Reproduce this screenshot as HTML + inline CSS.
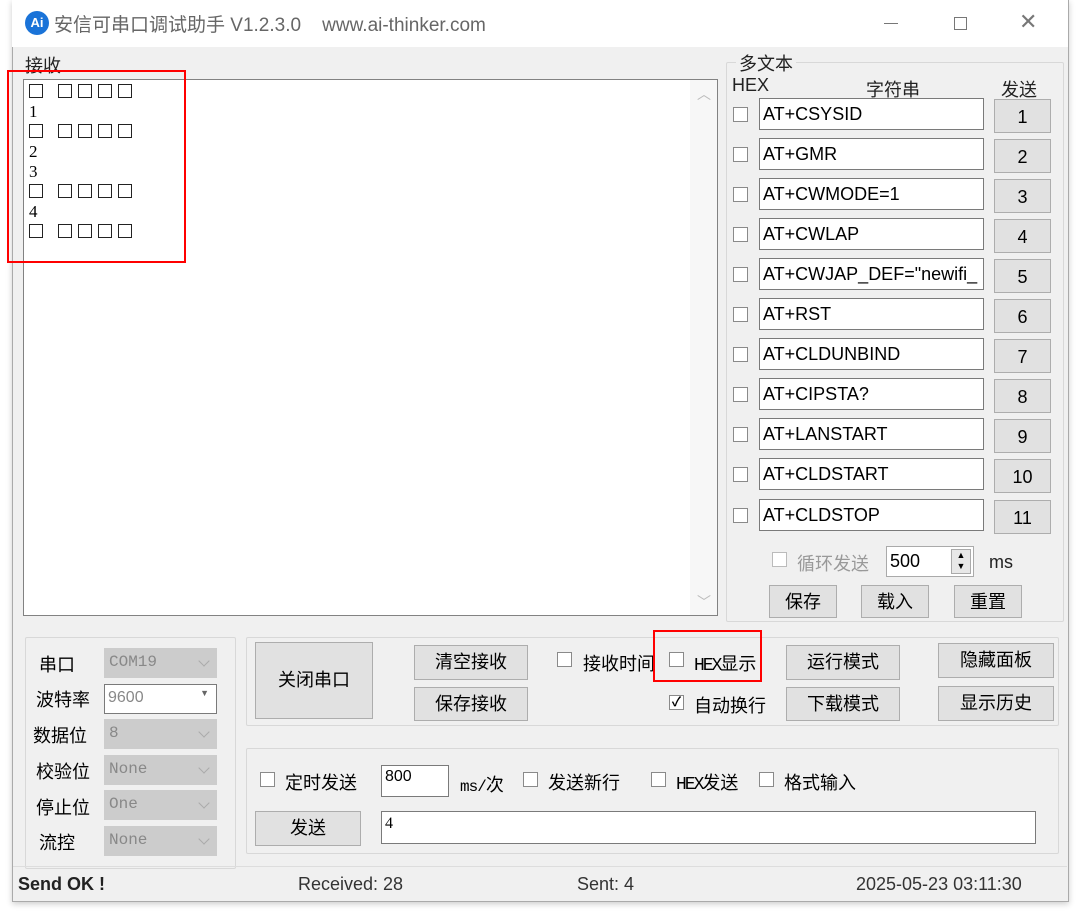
<!DOCTYPE html>
<html><head><meta charset="utf-8"><style>
*{box-sizing:border-box;margin:0;padding:0}
body{width:1080px;height:912px;background:#fff;position:relative;overflow:hidden;font-family:"Liberation Sans","Noto Sans CJK SC",sans-serif;font-size:18px;color:#000}
.a{position:absolute}
.win{left:12px;top:0;width:1057px;height:902px;background:#f0f0f0;border:1px solid #aaa;box-shadow:0 2px 6px rgba(0,0,0,.2)}
.title{left:12px;top:0;width:1056px;height:47px;background:#fff}
.grp{border:1px solid #d8d8d8;border-radius:2px}
.btn{position:absolute;background:#e1e1e1;border:1px solid #adadad;text-align:center;font-size:18px}
.inp{position:absolute;background:#fff;border:1px solid #7a7a7a;font-size:18px;padding-left:3px;white-space:nowrap;overflow:hidden}
.cb{position:absolute;width:15px;height:15px;border:1px solid #8a8a8a;background:#fff}
.cmb{position:absolute;background:#ccc;border:1px solid #ccc;color:#888;font-family:"Liberation Mono",monospace;font-size:16px;padding:4px 4px}
.cmb:after{content:"";position:absolute;right:8px;top:8px;width:7px;height:7px;border-right:1.5px solid #aaa;border-bottom:1.5px solid #aaa;transform:rotate(45deg)}
.lbl{position:absolute;font-size:18px}
.rx{font-family:"Liberation Serif",serif;font-size:17px;line-height:20px}
.bx{display:inline-block;width:14px;height:14px;border:1.6px solid #222;margin-right:6px;vertical-align:-1px}
</style></head><body>
<div class="a win"></div>
<div class="a title"></div>
<div class="a" style="left:25px;top:11px;width:24px;height:24px;border-radius:50%;background:#1a73d8;color:#fff;font-size:13px;font-weight:bold;text-align:center;line-height:24px">Ai</div>
<div class="a" style="left:54px;top:10px;font-size:19px;color:#666;white-space:nowrap">安信可串口调试助手 V1.2.3.0 &nbsp;&nbsp; www.ai-thinker.com</div>
<div class="a" style="left:884px;top:23px;width:14px;height:1px;background:#777"></div>
<div class="a" style="left:954px;top:17px;width:13px;height:13px;border:1px solid #777"></div>
<div class="a" style="left:1019px;top:9px;font-size:22px;color:#777">✕</div>

<div class="a" style="left:25px;top:52px;font-size:18px;color:#222">接收</div>
<div class="a" style="left:23px;top:79px;width:695px;height:537px;background:#fff;border:1px solid #828282"></div>
<div class="a" style="left:690px;top:80px;width:27px;height:535px;background:#f7f7f7"></div>
<div class="a" style="left:697px;top:84px;color:#bbb;font-size:14px">︿</div>
<div class="a" style="left:697px;top:592px;color:#bbb;font-size:14px">﹀</div>
<div class="a rx" style="left:29px;top:82px">
<div><span class="bx"></span> &nbsp;<span class="bx"></span><span class="bx"></span><span class="bx"></span><span class="bx"></span></div>
<div>1</div>
<div><span class="bx"></span> &nbsp;<span class="bx"></span><span class="bx"></span><span class="bx"></span><span class="bx"></span></div>
<div>2</div><div>3</div>
<div><span class="bx"></span> &nbsp;<span class="bx"></span><span class="bx"></span><span class="bx"></span><span class="bx"></span></div>
<div>4</div>
<div><span class="bx"></span> &nbsp;<span class="bx"></span><span class="bx"></span><span class="bx"></span><span class="bx"></span></div>
</div>
<div class="a" style="left:7px;top:70px;width:179px;height:193px;border:2px solid #f00"></div>

<div class="a grp" style="left:726px;top:62px;width:338px;height:560px"></div>
<div class="a" style="left:736px;top:50px;background:#f0f0f0;padding:0 3px;color:#222">多文本</div>
<div class="a" style="left:732px;top:75px;color:#222">HEX</div>
<div class="a" style="left:866px;top:76px;color:#222">字符串</div>
<div class="a" style="left:1001px;top:76px;color:#222">发送</div>

<div class="cb" style="left:733px;top:107px"></div><div class="inp" style="left:759px;top:98px;width:225px;height:32px;line-height:30px">AT+CSYSID</div><div class="btn" style="left:994px;top:99px;width:57px;height:34px;line-height:34px">1</div>
<div class="cb" style="left:733px;top:147px"></div><div class="inp" style="left:759px;top:138px;width:225px;height:32px;line-height:30px">AT+GMR</div><div class="btn" style="left:994px;top:139px;width:57px;height:34px;line-height:34px">2</div>
<div class="cb" style="left:733px;top:187px"></div><div class="inp" style="left:759px;top:178px;width:225px;height:32px;line-height:30px">AT+CWMODE=1</div><div class="btn" style="left:994px;top:179px;width:57px;height:34px;line-height:34px">3</div>
<div class="cb" style="left:733px;top:227px"></div><div class="inp" style="left:759px;top:218px;width:225px;height:32px;line-height:30px">AT+CWLAP</div><div class="btn" style="left:994px;top:219px;width:57px;height:34px;line-height:34px">4</div>
<div class="cb" style="left:733px;top:267px"></div><div class="inp" style="left:759px;top:258px;width:225px;height:32px;line-height:30px">AT+CWJAP_DEF="newifi_</div><div class="btn" style="left:994px;top:259px;width:57px;height:34px;line-height:34px">5</div>
<div class="cb" style="left:733px;top:307px"></div><div class="inp" style="left:759px;top:298px;width:225px;height:32px;line-height:30px">AT+RST</div><div class="btn" style="left:994px;top:299px;width:57px;height:34px;line-height:34px">6</div>
<div class="cb" style="left:733px;top:347px"></div><div class="inp" style="left:759px;top:338px;width:225px;height:32px;line-height:30px">AT+CLDUNBIND</div><div class="btn" style="left:994px;top:339px;width:57px;height:34px;line-height:34px">7</div>
<div class="cb" style="left:733px;top:387px"></div><div class="inp" style="left:759px;top:378px;width:225px;height:32px;line-height:30px">AT+CIPSTA?</div><div class="btn" style="left:994px;top:379px;width:57px;height:34px;line-height:34px">8</div>
<div class="cb" style="left:733px;top:427px"></div><div class="inp" style="left:759px;top:418px;width:225px;height:32px;line-height:30px">AT+LANSTART</div><div class="btn" style="left:994px;top:419px;width:57px;height:34px;line-height:34px">9</div>
<div class="cb" style="left:733px;top:467px"></div><div class="inp" style="left:759px;top:458px;width:225px;height:32px;line-height:30px">AT+CLDSTART</div><div class="btn" style="left:994px;top:459px;width:57px;height:34px;line-height:34px">10</div>
<div class="cb" style="left:733px;top:508px"></div><div class="inp" style="left:759px;top:499px;width:225px;height:32px;line-height:30px">AT+CLDSTOP</div><div class="btn" style="left:994px;top:500px;width:57px;height:34px;line-height:34px">11</div>

<div class="cb" style="left:772px;top:552px;border-color:#bbb"></div>
<div class="lbl" style="left:797px;top:550px;color:#999">循环发送</div>
<div class="inp" style="left:886px;top:546px;width:88px;height:31px;line-height:29px;border-color:#aaa">500</div>
<div class="a" style="left:951px;top:549px;width:20px;height:25px;background:#e8e8e8;border:1px solid #aaa;font-size:9px;text-align:center;line-height:11px">▲<br>▼</div>
<div class="lbl" style="left:989px;top:552px;color:#222">ms</div>
<div class="btn" style="left:769px;top:585px;width:68px;height:33px;line-height:32px">保存</div>
<div class="btn" style="left:861px;top:585px;width:68px;height:33px;line-height:32px">载入</div>
<div class="btn" style="left:954px;top:585px;width:68px;height:33px;line-height:32px">重置</div>

<div class="a grp" style="left:25px;top:637px;width:211px;height:232px"></div>
<div class="lbl" style="left:39px;top:651px">串口</div>
<div class="lbl" style="left:36px;top:686px">波特率</div>
<div class="lbl" style="left:33px;top:722px">数据位</div>
<div class="lbl" style="left:36px;top:758px">校验位</div>
<div class="lbl" style="left:36px;top:794px">停止位</div>
<div class="lbl" style="left:39px;top:829px">流控</div>
<div class="cmb" style="left:104px;top:648px;width:113px;height:30px">COM19</div>
<div class="a" style="left:104px;top:684px;width:113px;height:30px;background:#fff;border:1px solid #7a7a7a;color:#888;font-size:16px;padding:4px 3px">9600<span style="position:absolute;right:7px;top:3px;font-size:9px;color:#666">▼</span></div>
<div class="cmb" style="left:104px;top:719px;width:113px;height:30px">8</div>
<div class="cmb" style="left:104px;top:755px;width:113px;height:30px">None</div>
<div class="cmb" style="left:104px;top:790px;width:113px;height:30px">One</div>
<div class="cmb" style="left:104px;top:826px;width:113px;height:30px">None</div>

<div class="a grp" style="left:246px;top:637px;width:813px;height:89px"></div>
<div class="btn" style="left:255px;top:642px;width:118px;height:77px;line-height:75px">关闭串口</div>
<div class="btn" style="left:414px;top:645px;width:114px;height:35px;line-height:33px">清空接收</div>
<div class="btn" style="left:414px;top:687px;width:114px;height:34px;line-height:32px">保存接收</div>
<div class="cb" style="left:557px;top:652px"></div><div class="lbl" style="left:583px;top:650px">接收时间</div>
<div class="cb" style="left:669px;top:652px"></div><div class="lbl" style="left:694px;top:650px;font-family:'Liberation Mono',monospace;letter-spacing:-2px">HEX<span style="font-family:'Noto Sans CJK SC';letter-spacing:0">显示</span></div>
<div class="a" style="left:653px;top:630px;width:109px;height:52px;border:2px solid #f00"></div>
<div class="cb" style="left:669px;top:695px;font-size:13px;line-height:12px;text-align:center;font-weight:bold">✓</div><div class="lbl" style="left:694px;top:692px">自动换行</div>
<div class="btn" style="left:786px;top:645px;width:114px;height:35px;line-height:33px">运行模式</div>
<div class="btn" style="left:786px;top:687px;width:114px;height:34px;line-height:32px">下载模式</div>
<div class="btn" style="left:938px;top:643px;width:116px;height:35px;line-height:33px">隐藏面板</div>
<div class="btn" style="left:938px;top:686px;width:116px;height:35px;line-height:33px">显示历史</div>

<div class="a grp" style="left:246px;top:748px;width:813px;height:106px"></div>
<div class="cb" style="left:260px;top:772px"></div><div class="lbl" style="left:285px;top:769px">定时发送</div>
<div class="inp" style="left:381px;top:765px;width:68px;height:32px;line-height:22px;font-size:16px">800</div>
<div class="lbl" style="left:460px;top:771px;font-family:'Liberation Mono',monospace;font-size:16px;letter-spacing:-1px">ms/<span style="font-family:'Noto Sans CJK SC';font-size:18px">次</span></div>
<div class="cb" style="left:523px;top:772px"></div><div class="lbl" style="left:548px;top:769px">发送新行</div>
<div class="cb" style="left:651px;top:772px"></div><div class="lbl" style="left:676px;top:769px;font-family:'Liberation Mono',monospace;letter-spacing:-2px">HEX<span style="font-family:'Noto Sans CJK SC';letter-spacing:0">发送</span></div>
<div class="cb" style="left:759px;top:772px"></div><div class="lbl" style="left:784px;top:769px">格式输入</div>
<div class="btn" style="left:255px;top:811px;width:106px;height:35px;line-height:33px">发送</div>
<div class="inp" style="left:381px;top:811px;width:655px;height:33px;line-height:24px;font-family:'Liberation Serif',serif;font-size:16px">4</div>

<div class="a" style="left:13px;top:866px;width:1054px;height:1px;background:#ddd"></div>
<div class="lbl" style="left:18px;top:874px;font-weight:bold;color:#222">Send OK !</div>
<div class="lbl" style="left:298px;top:874px;color:#333">Received: 28</div>
<div class="lbl" style="left:577px;top:874px;color:#333">Sent: 4</div>
<div class="lbl" style="left:856px;top:874px;color:#333">2025-05-23 03:11:30</div>
</body></html>
